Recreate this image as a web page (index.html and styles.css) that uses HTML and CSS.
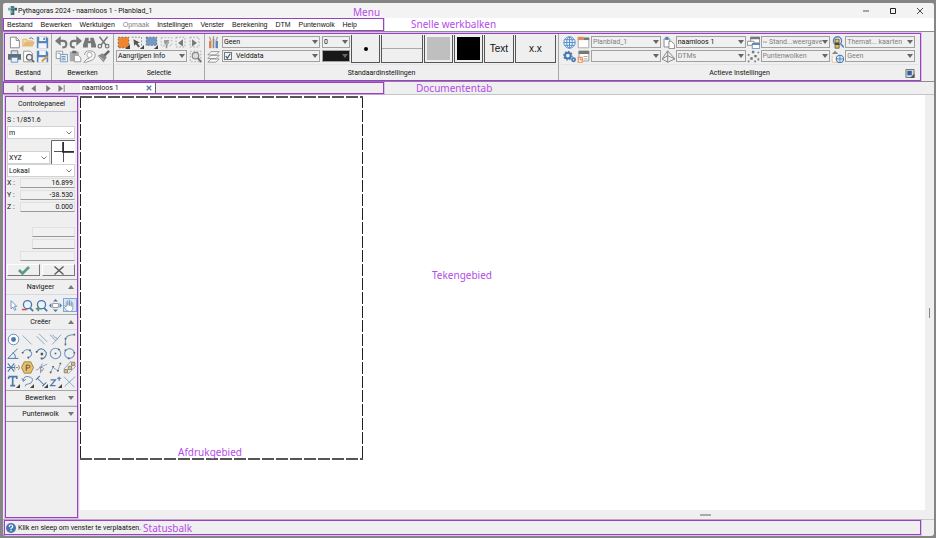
FILE: index.html
```html
<!DOCTYPE html>
<html lang="nl">
<head>
<meta charset="utf-8">
<title>Pythagoras 2024 - naamloos 1 - Planblad_1</title>
<link rel="stylesheet" href="styles.css">
</head>
<body>
<div class="window">
  <header class="titlebar">
    <svg class="app-icon" viewBox="0 0 10 10"><path d="M3 0h4v3H3z" fill="#4a7f82"/><path d="M0 2h3v3H0z" fill="#86a9a9"/><path d="M7 2h3v3H7z" fill="#2e5c66"/><path d="M3 3h4v7H3z" fill="#3b6e78"/><path d="M3 5h2v3H3z" fill="#7cb3ad"/></svg>
    <h1>Pythagoras 2024 - naamloos 1 - Planblad_1</h1>
    <span class="note note-menu">Menu</span>
    <div class="window-buttons">
      <button aria-label="Minimaliseren"><svg viewBox="0 0 8 8"><path d="M1 4h6" stroke="#555" fill="none"/></svg></button>
      <button aria-label="Maximaliseren"><svg viewBox="0 0 8 8"><path d="M1.500 1.500h5v5h-5z" stroke="#222" fill="none"/></svg></button>
      <button aria-label="Sluiten"><svg viewBox="0 0 8 8"><path d="M1 1l6 6M7 1l-6 6" stroke="#333" stroke-width=".9" fill="none"/></svg></button>
    </div>
  </header>

  <div class="menubar">
    <nav class="menu">
      <a href="#">Bestand</a><a href="#">Bewerken</a><a href="#">Werktuigen</a><a href="#" class="dim">Opmaak</a><a href="#">Instellingen</a><a href="#">Venster</a><a href="#">Berekening</a><a href="#">DTM</a><a href="#">Puntenwolk</a><a href="#">Help</a>
    </nav>
    <span class="note note-bars">Snelle werkbalken</span>
  </div>

  <div class="ribbon-row">
  <div class="ribbon">
    <section class="group g-file">
      <div class="tools cols3">
        <button aria-label="Nieuw"><svg viewBox="0 0 16 16"><path d="M3 1.500h7l4 4v9H3z" fill="#fff" stroke="#777"/><path d="M10 1.500v4h4" fill="none" stroke="#777"/></svg></button>
        <button aria-label="Openen"><svg viewBox="0 0 16 16"><path d="M1 13V4h5l1 2h6v3" fill="#f3d7a4" stroke="#d9ae6a"/><path d="M1 13l3-6h12l-3 6z" fill="#e5b873"/><path d="M9 3q3-2 5 1" stroke="#557" fill="none"/></svg></button>
        <button aria-label="Opslaan"><svg viewBox="0 0 16 16"><path d="M1 1h12l2 2v12H1z" fill="#5a84b8"/><path d="M4 1h8v5H4zM3 9h10v6H3z" fill="#f2f6fb"/><path d="M9 2h2v3H9z" fill="#5a84b8"/></svg></button>
        <button aria-label="Afdrukken"><svg viewBox="0 0 16 16"><path d="M4 1h8v5H4z" fill="#dde6f0" stroke="#666"/><path d="M0 5h16v7H0z" fill="#626d78"/><path d="M4 9h8v6H4z" fill="#e8eff8" stroke="#5a84b8"/></svg></button>
        <button aria-label="Afdrukvoorbeeld"><svg viewBox="0 0 16 16"><path d="M2 1.500h8l3 3v10H2z" fill="#fff" stroke="#888"/><circle cx="9" cy="9" r="3.500" fill="#eef" stroke="#666" stroke-width="1.500"/><path d="M12 12l3 3" stroke="#666" stroke-width="2"/></svg></button>
        <button aria-label="Opslaan als"><svg viewBox="0 0 16 16"><path d="M1 1h12l2 2v12H1z" fill="#5a84b8"/><path d="M4 1h8v5H4zM3 9h10v6H3z" fill="#f2f6fb"/><path d="M7 14l7-6" stroke="#d99a50" stroke-width="2.500"/></svg></button>
      </div>
      <h2>Bestand</h2>
    </section>

    <section class="group g-edit">
      <div class="tools cols4">
        <button aria-label="Ongedaan maken"><svg viewBox="0 0 16 16"><path d="M4 6h6q4 0 4 4t-5 4" fill="none" stroke="#777" stroke-width="2.500"/><path d="M0 6l7-6v12z" fill="#777"/></svg></button>
        <button aria-label="Opnieuw"><svg viewBox="0 0 16 16"><path d="M12 6H6q-4 0-4 4t5 4" fill="none" stroke="#777" stroke-width="2.500"/><path d="M16 6L9 0v12z" fill="#777"/></svg></button>
        <button aria-label="Zoeken"><svg viewBox="0 0 16 16"><path d="M3 2h4v4h2V2h4l3 9v3h-6V9H6v5H0v-3z" fill="#777"/></svg></button>
        <button aria-label="Knippen"><svg viewBox="0 0 16 16"><path d="M3 1l8 10M13 1L5 11" stroke="#777" stroke-width="1.800"/><circle cx="3.500" cy="12.500" r="2.200" fill="none" stroke="#777" stroke-width="1.500"/><circle cx="12.500" cy="12.500" r="2.200" fill="none" stroke="#777" stroke-width="1.500"/></svg></button>
        <button aria-label="Kopiëren"><svg viewBox="0 0 16 16"><path d="M1.500 1.500h8v9h-8z" fill="#fff" stroke="#888"/><path d="M6.500 5.500h9v9h-9z" fill="#e9f1fa" stroke="#6b8cb0"/><path d="M3 4h4M8 8h5M8 10h5M8 12h5" stroke="#5a84b8"/></svg></button>
        <button aria-label="Plakken"><svg viewBox="0 0 16 16"><path d="M1 2h11v12H1z" fill="#aaa"/><path d="M4 1h5v3H4z" fill="#666"/><path d="M6.500 6.500h5l3 3v5h-8z" fill="#fff" stroke="#888"/></svg></button>
        <button aria-label="Selectie kopiëren"><svg viewBox="0 0 16 16"><path d="M2 6Q2 1 8 1q7 0 7 5t-5 7l-6 2H1l4-4 3-1" fill="#f8f8f8" stroke="#999" stroke-width="1.200"/><circle cx="8" cy="6" r="3.200" fill="#fff" stroke="#999"/></svg></button>
        <button aria-label="Opmaak kopiëren"><svg viewBox="0 0 16 16"><path d="M1 7l6-3 5 5-4 6z" fill="#888"/><path d="M9 7l6-6" stroke="#666" stroke-width="3"/><path d="M3 8l6 5" stroke="#ccc"/></svg></button>
      </div>
      <h2>Bewerken</h2>
    </section>

    <section class="group g-select">
      <div class="tools cols6">
        <button aria-label="Selecteren"><svg viewBox="0 0 16 16"><path d="M1.500 1.500h13v13h-13z" fill="#f0852d" stroke="#555" stroke-dasharray="2 2"/><path d="M16 10v6h-6z" fill="#444"/></svg></button>
        <button aria-label="Selectie met pijl"><svg viewBox="0 0 16 16"><path d="M1 1.500h12v10" fill="none" stroke="#777" stroke-dasharray="2 2"/><path d="M3 4l8 4-3 1 3 4-2 1-3-4-2 2z" fill="#555"/><path d="M16 11v5h-5z" fill="#444"/></svg></button>
        <button aria-label="Vlakselectie"><svg viewBox="0 0 16 16"><path d="M1.500 1.500h13v10h-13z" fill="#7198c6" stroke="#666" stroke-dasharray="2 2"/><path d="M16 11v5h-5z" fill="#444"/></svg></button>
        <button aria-label="Selectie oplichten"><svg viewBox="0 0 16 16"><path d="M1.500 2h13v10h-13z" fill="none" stroke="#aaa" stroke-dasharray="2 2"/><path d="M5 5h6v4l-2 2v4H7v-4L5 9z" fill="#999"/><path d="M3 14l10-9" stroke="#ccc"/></svg></button>
        <button aria-label="Vorige selectie"><svg viewBox="0 0 16 16"><path d="M2.500 1.500h11v12h-11z" fill="none" stroke="#999" stroke-dasharray="2 2"/><path d="M11 4v9L5 8.500z" fill="#777"/></svg></button>
        <button aria-label="Volgende selectie"><svg viewBox="0 0 16 16"><path d="M2.500 1.500h11v12h-11z" fill="none" stroke="#999" stroke-dasharray="2 2"/><path d="M5 4v9l6-4.500z" fill="#777"/></svg></button>
      </div>
      <div class="line">
        <select class="grow" aria-label="Selectiewijze"><option>Aangrijpen Info</option></select>
        <button aria-label="Selectie zoeken"><svg viewBox="0 0 16 16"><path d="M1.500 1.500h13v13h-13z" fill="none" stroke="#999" stroke-dasharray="2 2"/><circle cx="8" cy="7" r="4" fill="#ddd" stroke="#888" stroke-width="1.500"/><path d="M11 10l4 5" stroke="#777" stroke-width="2.500"/></svg></button>
      </div>
      <h2>Selectie</h2>
    </section>

    <section class="group g-default">
      <div class="default-body">
        <div class="default-fields">
          <svg viewBox="0 0 16 16"><path d="M4 6v9" stroke="#e27c52" stroke-width="3"/><path d="M8 3v12" stroke="#888" stroke-width="2"/><path d="M12 6v9" stroke="#5a84b8" stroke-width="3"/><path d="M3 1l2 5M13 1l-2 5M8 0v4" stroke="#b98" stroke-width="1.500"/></svg>
          <select aria-label="Stijl"><option>Geen</option></select>
          <select aria-label="Dikte"><option>0</option></select>
          <svg viewBox="0 0 16 16"><path d="M1 15l4-4h10l-4 4zM1 10.500l4-4h10l-4 4zM1 6l4-4h10l-4 4z" fill="#f8f8f8" stroke="#888"/></svg>
          <div class="layer"><input type="checkbox" checked aria-label="Laag zichtbaar"><select aria-label="Laag"><option>Velddata</option></select></div>
          <select class="black" aria-label="Kleur"><option></option></select>
        </div>
        <button class="swatch" aria-label="Puntstijl"><i class="dot"></i></button>
        <button class="swatch wide" aria-label="Lijnstijl"><i class="stroke"></i></button>
        <button class="swatch" aria-label="Vulling"><i class="fill gray"></i></button>
        <button class="swatch" aria-label="Vulkleur"><i class="fill"></i></button>
        <button class="swatch">Text</button>
        <button class="swatch wide">x.x</button>
      </div>
      <h2>Standaardinstellingen</h2>
    </section>

    <section class="group g-active">
      <div class="active-fields">
        <svg viewBox="0 0 16 16"><g fill="none" stroke="#5a8fc6" stroke-width="1.200"><circle cx="8" cy="8" r="7" fill="#eef5fc"/><ellipse cx="8" cy="8" rx="3.500" ry="7"/><path d="M1 8h14M8 1v14M2 4.500h12M2 11.500h12"/></g></svg>
        <svg viewBox="0 0 16 16"><path d="M1.500 2.500h13v12h-13z" fill="#fff" stroke="#999"/><path d="M1 1h7v4H1z" fill="#e9894f"/><path d="M8 2h7v3H8z" fill="#777"/></svg>
        <select class="dim" aria-label="Planblad"><option>Planblad_1</option></select>
        <svg viewBox="0 0 16 16"><path d="M2.500 3.500h7v10h-7z" fill="#fff" stroke="#777"/><path d="M4 1h4v4H4z" fill="#5a84b8"/><path d="M8.500 6.500h3l4 4v5h-7z" fill="#fff" stroke="#777"/></svg>
        <select aria-label="Document"><option>naamloos 1</option></select>
        <svg viewBox="0 0 16 16"><path d="M4.500 1.500h11v7h-11z" fill="#fff" stroke="#777"/><path d="M4 1h12v3H4z" fill="#777"/><path d="M.5 6.500h8v5h-8z" fill="#fff" stroke="#777"/><path d="M6.500 9.500h9v6h-9z" fill="#fff" stroke="#5a84b8"/><path d="M6 9h10v2H6z" fill="#5a84b8"/></svg>
        <select class="dim" aria-label="Weergave"><option>~ Stand...weergave</option></select>
        <svg viewBox="0 0 16 16"><circle cx="8" cy="6" r="5" fill="#eaf2fb" stroke="#5a84b8" stroke-width="1.700"/><path d="M12 10l4 4" stroke="#5a84b8" stroke-width="2"/><path d="M5 4h5v11H5z" fill="#e7bd4d" stroke="#555"/><path d="M5 8h5v3H5z" fill="#444"/></svg>
        <select class="dim" aria-label="Thematische kaart"><option>Themat... kaarten</option></select>

        <svg viewBox="0 0 16 16"><circle cx="6" cy="7" r="3.500" fill="none" stroke="#4878b0" stroke-width="2.500"/><circle cx="6" cy="7" r="5.200" fill="none" stroke="#4878b0" stroke-width="1.500" stroke-dasharray="2 2"/><circle cx="13" cy="12" r="2" fill="none" stroke="#4878b0" stroke-width="2"/></svg>
        <svg viewBox="0 0 16 16"><path d="M2.500 1.500h12v12h-12z" fill="#fff" stroke="#888"/><path d="M2 1h13v4H2z" fill="#777"/><path d="M8 8h5M8 11h5" stroke="#999"/><path d="M1.500 9h5v6h-5zM4 9v3h3" fill="#fff" stroke="#e9894f" stroke-width="1.300"/></svg>
        <select class="dim" aria-label="Planbladdeel"><option></option></select>
        <svg viewBox="0 0 16 16"><path d="M0 11l7-10 9 10-9 4zM7 1v14M0 11l7-4 9 4" fill="none" stroke="#888" stroke-width="1.200"/></svg>
        <select class="dim" aria-label="DTM"><option>DTMs</option></select>
        <svg viewBox="0 0 16 16"><path d="M6 1h3v3H6zM13 2h2v2h-2zM1 5h2v2H1zM9 6h3v3H9zM4 9h3v3H4zM13 10h2v3h-2zM1 13h2v2H1zM9 13h2v2H9z" fill="#777"/></svg>
        <select class="dim" aria-label="Puntenwolk"><option>Puntenwolken</option></select>
        <svg viewBox="0 0 16 16"><path d="M1.500 7v8h6" fill="#fff" stroke="#e9b870"/><path d="M1 5l4-4 4 4z" fill="#888"/><circle cx="11" cy="11" r="4.500" fill="#dbe9f8" stroke="#4878b0" stroke-width="1.300"/><path d="M6 11h10M11 6v10" stroke="#4878b0"/></svg>
        <select class="dim" aria-label="Kaart"><option>Geen</option></select>
      </div>
      <div class="caption"><h2>Actieve Instellingen</h2>
        <button class="launcher" aria-label="Alle instellingen"><svg viewBox="0 0 10 10"><path d="M.5.5h9v9h-9z" fill="#d6dce6" stroke="#666"/><path d="M2 2h5v5H2z" fill="#38619c"/><path d="M10 5v5H5z" fill="#555"/></svg></button>
      </div>
    </section>
  </div>
  </div>

  <div class="tabrow">
    <div class="tabs">
      <div class="pager">
        <button aria-label="Eerste"><svg viewBox="0 0 8 8"><path d="M1.500 0v8" stroke="#777"/><path d="M8 0v8L3 4z" fill="#777"/></svg></button>
        <button aria-label="Vorige"><svg viewBox="0 0 8 8"><path d="M6 0v8L1 4z" fill="#777"/></svg></button>
        <button aria-label="Volgende"><svg viewBox="0 0 8 8"><path d="M2 0v8l5-4z" fill="#777"/></svg></button>
        <button aria-label="Laatste"><svg viewBox="0 0 8 8"><path d="M6.500 0v8" stroke="#777"/><path d="M0 0v8l5-4z" fill="#777"/></svg></button>
      </div>
      <div class="tab"><span>naamloos 1</span><button aria-label="Tab sluiten"><svg viewBox="0 0 8 8"><path d="M1 1l6 6M7 1L1 7" stroke="#5078ac" stroke-width="1.600"/></svg></button></div>
    </div>
    <span class="note note-tab">Documententab</span>
  </div>

  <main>
    <aside>
      <h2 class="panel-title">Controlepaneel</h2>
      <form class="control">
        <p>S : 1/851.6</p>
        <select class="open" aria-label="Eenheid"><option>m</option></select>
        <div class="axis">
          <select class="open" aria-label="Assen"><option>XYZ</option></select>
          <svg viewBox="0 0 24 24"><path d="M0 0h24v24H0z" fill="#fff"/><path d="M.5 24V.5H24" fill="none" stroke="#666"/><path d="M3 11.500h20M12.500 2v20" stroke="#555"/><path d="M12 2v10h11" fill="none" stroke="#222" stroke-width="1.500"/></svg>
        </div>
        <select class="open" aria-label="Stelsel"><option>Lokaal</option></select>
        <label>X :<input value="16.899"></label>
        <label>Y :<input value="-38.530"></label>
        <label>Z :<input value="0.000"></label>
        <div class="extra">
          <input class="short" aria-label="Afstand"><input class="short" aria-label="Hoek"><input aria-label="Commentaar">
        </div>
        <div class="confirm">
          <button type="button" aria-label="Bevestigen"><svg viewBox="0 0 12 9"><path d="M1 4l3.500 3.500L11 1" fill="none" stroke="#5a9a80" stroke-width="2.600"/></svg></button>
          <button type="button" aria-label="Annuleren"><svg viewBox="0 0 12 9"><path d="M1.500.5l9 8M10.500.5l-9 8" stroke="#555" stroke-width="1.300"/></svg></button>
        </div>
      </form>
      <button class="section up">Navigeer</button>
      <div class="palette nav">
        <button aria-label="Aanwijzen"><svg viewBox="0 0 16 16"><path d="M5 2v10l2.500-2 2 4 1.500-1-2-4h3z" fill="#fff" stroke="#5a84b8"/></svg></button>
        <button aria-label="Uitzoomen"><svg viewBox="0 0 16 16"><circle cx="8" cy="7" r="5" fill="#eaf2fb" stroke="#4878b0" stroke-width="1.600"/><path d="M11 11l4 4" stroke="#4878b0" stroke-width="2.200"/><path d="M1 13h6" stroke="#d95440" stroke-width="2"/></svg></button>
        <button aria-label="Inzoomen"><svg viewBox="0 0 16 16"><circle cx="8" cy="7" r="5" fill="#eaf2fb" stroke="#4878b0" stroke-width="1.600"/><path d="M11 11l4 4" stroke="#4878b0" stroke-width="2.200"/><path d="M1 12h6M4 9v6" stroke="#579070" stroke-width="2"/></svg></button>
        <button aria-label="Passend"><svg viewBox="0 0 16 16"><path d="M8 0l3 3H5zM8 16l3-3H5zM0 8l3-3v6zM16 8l-3-3v6z" fill="#4878b0"/><path d="M4.500 5.500h7v5h-7z" fill="#fff" stroke="#888"/></svg></button>
        <button class="on" aria-label="Verschuiven"><svg viewBox="0 0 16 16"><path d="M4 14l-3-5 1-1 2 2V4l1-1 1 1v4-6l1-1 1 1v6-5l1-1 1 1v6-4l1-1 1 1v7l-2 4z" fill="#fff" stroke="#7890aa"/></svg></button>
      </div>
      <button class="section up">Creëer</button>
      <div class="palette">
        <button aria-label="Punt"><svg viewBox="0 0 16 16"><circle cx="8" cy="8" r="6.500" fill="#fff" stroke="#4878b0"/><circle cx="8" cy="8" r="3" fill="#4878b0"/></svg></button>
        <button aria-label="Lijn"><svg viewBox="0 0 16 16"><path d="M2 3l11 11" stroke="#7198c6"/></svg></button>
        <button aria-label="Parallel"><svg viewBox="0 0 16 16"><path d="M2 4l10 10M5 1l10 10" stroke="#7198c6"/></svg></button>
        <button aria-label="Loodlijn"><svg viewBox="0 0 16 16"><path d="M1 2l8 8M4 14L15 2M4 2l4 4" fill="none" stroke="#7198c6"/><path d="M8 5l3 3" stroke="#888"/></svg></button>
        <button aria-label="Raakboog"><svg viewBox="0 0 16 16"><path d="M3 15V9q0-7 11-7" fill="none" stroke="#7198c6" stroke-width="1.300"/><path d="M2 6h2v2H2zM13 1h2v2h-2zM2 13h2v2H2z" fill="#666"/></svg></button>
        <button aria-label="Hoek"><svg viewBox="0 0 16 16"><path d="M13 2L1 14h13M7 7q4 2 3 7" fill="none" stroke="#4878b0" stroke-width="1.200"/></svg></button>
        <button aria-label="Boog"><svg viewBox="0 0 16 16"><path d="M2 7q5-8 11 0 1 4-4 6" fill="none" stroke="#7198c6" stroke-width="1.300"/><path d="M1 6h2v2H1zM8 12h2v2H8zM10 3h2v2h-2z" fill="#555"/></svg></button>
        <button aria-label="Middelpuntsboog"><svg viewBox="0 0 16 16"><path d="M2 6q6-8 12 1 0 6-6 8" fill="none" stroke="#4878b0" stroke-width="1.300"/><path d="M7 7h3v3H7zM1 5h2v2H1zM7 13h2v2H7z" fill="#555"/></svg></button>
        <button aria-label="Cirkel"><svg viewBox="0 0 16 16"><circle cx="8" cy="8" r="6.500" fill="none" stroke="#7198c6" stroke-width="1.300"/><path d="M7 7h2v2H7zM11 2h2v2h-2z" fill="#555"/></svg></button>
        <button aria-label="Cirkel door punten"><svg viewBox="0 0 16 16"><circle cx="8" cy="8" r="6" fill="none" stroke="#7198c6" stroke-width="1.300"/><path d="M2 3h2v2H2zM13 6h2v2h-2zM6 13h2v2H6z" fill="#666"/></svg></button>
        <button aria-label="Snijpunt"><svg viewBox="0 0 16 16"><path d="M1 3l8 10M9 3L1 13M0 8h10" stroke="#4878b0" stroke-width="1.300"/><path d="M10 5q-2 3 0 6M14 5q3 3 0 6M11 8h3" fill="none" stroke="#777"/></svg></button>
        <button aria-label="Veelhoek"><svg viewBox="0 0 16 16"><path d="M4 1h8l3.500 7L12 15H4L.5 8z" fill="#ebbe62" stroke="#8b7750"/><path d="M6.500 12V5h2.500q2 0 2 1.800t-2 1.800H6.500" fill="none" stroke="#555" stroke-width="1.200"/></svg></button>
        <button aria-label="Pad"><svg viewBox="0 0 16 16"><path d="M1 11q5 0 8-8M15 4L5 8" fill="none" stroke="#7198c6"/><path d="M7 15V8h2q3 1 0 4H7" fill="none" stroke="#777"/></svg></button>
        <button aria-label="Polylijn"><svg viewBox="0 0 16 16"><path d="M2 14l3-6 6 4 3-9" fill="none" stroke="#7198c6"/><path d="M1 13h2v2H1zM4 6h2v2H4zM10 11h2v2h-2zM13 2h2v2h-2z" fill="#555"/></svg></button>
        <button aria-label="Symbolen"><svg viewBox="0 0 16 16"><path d="M1 10L10 0M6 16l10-10" stroke="#7198c6"/><path d="M1.500 10.500h4v4h-4zM6.500 6.500h4v4h-4zM10.500 1.500h4v4h-4z" fill="#ebbe62" stroke="#777"/></svg></button>
        <button aria-label="Tekst"><svg viewBox="0 0 16 16"><path d="M2 2h10v3M7 2v11M4 13h6M2 2v3" stroke="#4878b0" stroke-width="2" fill="none"/><path d="M16 11v5h-5z" fill="#444"/></svg></button>
        <button aria-label="Roteren"><svg viewBox="0 0 16 16"><path d="M3 7q0-6 6-5t5 5-5 4-4 3M1 4l2 4 3-3" fill="none" stroke="#4878b0"/><path d="M16 11v5h-5z" fill="#444"/></svg></button>
        <button aria-label="Maatlijn"><svg viewBox="0 0 16 16"><path d="M1 6l5-5M9 14l5-5M3 4l8 8" stroke="#4878b0" stroke-width="1.300"/><path d="M16 11v5h-5z" fill="#444"/></svg></button>
        <button aria-label="Hoogte"><svg viewBox="0 0 16 16"><path d="M2 6h6l-6 7h6M10 4h5M12.500 2v5" fill="none" stroke="#4878b0" stroke-width="1.500"/><path d="M16 11v5h-5z" fill="#444"/></svg></button>
        <button aria-label="Kruis"><svg viewBox="0 0 16 16"><path d="M1 2l13 13M15 2L2 14" stroke="#7198c6"/></svg></button>
      </div>
      <button class="section down">Bewerken</button>
      <button class="section down">Puntenwolk</button>
    </aside>

    <div class="workspace">
      <div class="canvas">
        <div class="page"></div>
        <span class="note note-page">Afdrukgebied</span>
        <span class="note note-canvas">Tekengebied</span>
      </div>
      <div class="vscroll"><i></i></div>
      <div class="hscroll"><i></i></div>
    </div>
  </main>

  <footer>
    <div class="status">
      <svg viewBox="0 0 10 10"><circle cx="5" cy="5" r="5" fill="#4775ae"/><path d="M3.200 3.800Q3.500 2 5 2t1.800 1.500Q6.800 4.500 5 5.400v.8M5 7v1.200" fill="none" stroke="#fff" stroke-width="1.200"/></svg>
      <span>Klik en sleep om venster te verplaatsen.</span>
      <span class="note">Statusbalk</span>
    </div>
  </footer>
</div>
</body>
</html>
```
FILE: styles.css
```css
* { box-sizing: border-box; }

:root {
  --mark: #9a40c4;
  --halo: 0 0 0 1px rgba(170, 90, 215, .3);
  --chrome: #efefef;
  --line: #8c8c8c;
}

body {
  margin: 0;
  height: 100vh;
  padding: 3px 2px 2px 3px;
  background: #858585;
  font: 7px/10px Roboto, "Liberation Sans", sans-serif;
  color: #111;
}

h1, h2, p { margin: 0; font: inherit; }
svg { display: block; }
a { color: inherit; text-decoration: none; }

button {
  display: flex;
  align-items: center;
  justify-content: center;
  padding: 0;
  border: 0;
  background: none;
  font: inherit;
  color: inherit;
}

select, input {
  margin: 0;
  min-width: 0;
  font: inherit;
  color: inherit;
  border-radius: 0;
}

select {
  appearance: none;
  height: 12px;
  padding: 0 7px 0 1px;
  border: 1px solid #a0a0a0;
  background: #f0f0f0 url("data:image/svg+xml,%3Csvg xmlns='http://www.w3.org/2000/svg' viewBox='0 0 6 4'%3E%3Cpath d='M0 0h6L3 4z' fill='%23666'/%3E%3C/svg%3E") no-repeat right 1px center / 6px 4px;
}

.dim { color: #808080; }

.window {
  display: flex;
  flex-direction: column;
  height: 100%;
  background: var(--chrome);
  border-radius: 3px;
}

.note {
  font: 10px/12px "Noto Sans", sans-serif;
  color: #b54be8;
  white-space: nowrap;
}

/* Title bar and menu */
.titlebar {
  position: relative;
  display: flex;
  align-items: center;
  height: 15px;
  padding: 0 10px 0 5px;
  gap: 1px;
  background: #f3f3f3;
  border-radius: 3px 3px 0 0;
}
.app-icon { width: 9px; height: 9px; }
.note-menu { position: absolute; left: 350px; top: 3px; }
.window-buttons { display: flex; gap: 19px; margin-left: auto; }
.window-buttons svg { width: 8px; height: 8px; }

.menubar { display: flex; height: 13px; background: #fff; align-items: stretch; }
.menu {
  display: flex;
  align-items: center;
  justify-content: space-between;
  width: 381px;
  padding: 0 26px 0 3px;
  border: 1px solid var(--mark);
  box-shadow: var(--halo);
  font-family: "Liberation Sans", sans-serif;
}
.note-bars { margin-left: 27px; }
.note-tab { margin-left: 32px; }

/* Ribbon */
.ribbon-row {
  padding: 1px 13px 0 1px;
  border-top: 1px solid var(--line);
  border-bottom: 1px solid var(--line);
}
.ribbon {
  display: flex;
  height: 48px;
  border: 1px solid var(--mark);
  box-shadow: var(--halo);
}
.group {
  display: flex;
  flex-direction: column;
  border-right: 1px solid #a8a8a8;
  padding: 1px 2px 0;
}
.group:last-child { border-right: 0; }
.group h2 {
  margin-top: auto;
  padding: 3px 0 2px;
  text-align: center;
  border-top: 1px solid #e3e3ec;
}
.group svg { width: 13px; height: 13px; }
.g-file { width: 47px; }
.g-edit { width: 62px; }
.g-select { width: 91px; }
.g-default { width: 354px; }
.g-active { flex: 1; }

.tools { display: grid; grid-auto-rows: 14px; }
.cols3 { grid-template-columns: repeat(3, 1fr); }
.cols4 { grid-template-columns: repeat(4, 1fr); }
.cols6 { grid-template-columns: repeat(6, 1fr); }
.line { display: flex; align-items: center; gap: 1px; height: 14px; }
.line button { width: 14px; }
.grow { flex: 1; }

.default-body { display: flex; gap: 1px; height: 28px; }
.default-fields {
  display: grid;
  grid-template-columns: 13px 98px 28px;
  grid-auto-rows: 14px;
  column-gap: 2px;
  align-items: center;
}
.layer {
  display: flex;
  align-items: center;
  height: 12px;
  padding-left: 1px;
  border: 1px solid #a0a0a0;
}
.layer input {
  appearance: none;
  width: 8px;
  height: 8px;
  border: 1px solid #777;
  background: #eef3fb url("data:image/svg+xml,%3Csvg xmlns='http://www.w3.org/2000/svg' viewBox='0 0 8 8'%3E%3Cpath d='M1 4l2 3 4-6' fill='none' stroke='%23356' stroke-width='1.500'/%3E%3C/svg%3E") center / 6px 6px no-repeat;
}
.layer select { flex: 1; height: 10px; border: 0; padding-left: 4px; }
.black { background-color: #181818; }

.swatch {
  flex: 29;
  border: 1px solid #555;
  border-width: 0 1px 1px;
  font: 10px/12px "Liberation Sans", sans-serif;
}
.swatch.wide { flex: 42; }
.dot { width: 4px; height: 4px; border-radius: 50%; background: #000; }
.stroke { width: 100%; height: 1px; background: #aaa; }
.fill { width: 23px; height: 23px; background: #000; }
.fill.gray { background: #bfbfbf; }

.active-fields {
  display: grid;
  grid-template-columns: 13px 13px 1fr 13px 1fr 13px 1fr 13px 1fr;
  grid-auto-rows: 14px;
  column-gap: 1px;
  align-items: center;
  padding: 0 3px 0 2px;
}
.caption { position: relative; margin-top: auto; }
.launcher { position: absolute; right: 3px; bottom: 2px; }
.launcher svg { width: 10px; height: 9px; }

/* Document tabs */
.tabrow { display: flex; height: 13px; border-bottom: 1px solid #c4c4c4; }
.tabs { display: flex; width: 381px; border: 1px solid var(--mark); box-shadow: var(--halo); }
.pager { display: flex; align-items: center; gap: 6px; width: 76px; padding-left: 12px; }
.pager svg { width: 8px; height: 7px; }
.tab {
  display: flex;
  align-items: center;
  justify-content: space-between;
  width: 76px;
  padding: 0 3px 0 2px;
  background: #fff;
  border-right: 1px solid #666;
}
.tab svg { width: 6px; height: 6px; }

/* Control panel */
main { display: flex; flex: 1; min-height: 0; }
aside {
  display: flex;
  flex-direction: column;
  width: 73px;
  margin: 1px 2px 1px 2px;
  border: 1px solid var(--mark);
  box-shadow: var(--halo);
}
.panel-title { height: 15px; padding-top: 2px; text-align: center; border-bottom: 1px solid #c5c5d0; }
.control { display: flex; flex-direction: column; padding: 3px 2px 3px 1px; }
.control p { height: 11px; }
.open {
  height: 13px;
  background: #fff url("data:image/svg+xml,%3Csvg xmlns='http://www.w3.org/2000/svg' viewBox='0 0 6 4'%3E%3Cpath d='M.5.5L3 3 5.500.5' fill='none' stroke='%23777'/%3E%3C/svg%3E") no-repeat right 2px center / 6px 4px;
  border-color: #d2d2d2;
}
.axis { display: flex; align-items: flex-end; gap: 1px; height: 25px; }
.axis select { flex: 1; }
.axis svg { width: 24px; height: 24px; }
.control label { display: flex; align-items: center; justify-content: space-between; height: 12px; }
.control input {
  width: 55px;
  height: 10px;
  padding: 0 1px;
  text-align: right;
  background: #f1f1f1;
  border: 1px solid #e0e0e0;
  border-bottom-color: #999;
}
.extra { display: flex; flex-direction: column; align-items: flex-end; gap: 2px; padding: 14px 0 3px; }
.control .short { width: 43px; }
.confirm { display: flex; gap: 2px; }
.confirm button {
  flex: 1;
  height: 12px;
  border: 1px solid #fff;
  border-right-color: #777;
  border-bottom-color: #777;
}
.confirm svg { width: 12px; height: 9px; }

.section {
  height: 16px;
  padding-right: 2px;
  border-top: 1px solid #a8a8a8;
  border-bottom: 1px solid #d8d8e4;
  background: url("data:image/svg+xml,%3Csvg xmlns='http://www.w3.org/2000/svg' viewBox='0 0 6 4'%3E%3Cpath d='M0 0h6L3 4z' fill='%23777'/%3E%3C/svg%3E") no-repeat right 3px center / 6px 4px;
}
.section.up {
  background-image: url("data:image/svg+xml,%3Csvg xmlns='http://www.w3.org/2000/svg' viewBox='0 0 6 4'%3E%3Cpath d='M0 4h6L3 0z' fill='%23777'/%3E%3C/svg%3E");
}
.section:last-child { border-bottom-color: #999; }
.palette { display: grid; grid-template-columns: repeat(5, 1fr); grid-auto-rows: 14px; padding: 2px 0; }
.palette svg { width: 13px; height: 13px; }
.palette.nav { padding: 3px 0 2px; }
.palette .on { outline: 1px solid #7ba7dc; outline-offset: -1px; background: #d9e8f8; }

/* Drawing area */
.workspace {
  flex: 1;
  display: grid;
  grid-template: 1fr 9px / 1fr 9px;
}
.canvas { position: relative; padding-top: 1px; background: #fff; }
.page {
  width: 33.5%;
  height: 88%;
  background:
    repeating-linear-gradient(90deg, #555 0 12px, #fff 12px 14px) top / 100% 2px no-repeat,
    repeating-linear-gradient(90deg, #555 0 12px, #fff 12px 14px) bottom / 100% 2px no-repeat,
    repeating-linear-gradient(#222 0 12px, #fff 12px 14px) left / 1px 100% no-repeat,
    repeating-linear-gradient(#222 0 12px, #fff 12px 14px) right / 1px 100% no-repeat;
}
.note-page { position: absolute; left: 98px; top: 351px; }
.note-canvas { position: absolute; left: 352px; top: 174px; }
.vscroll, .hscroll { display: flex; align-items: center; justify-content: center; }
.hscroll { padding-left: 405px; }
.vscroll { padding-top: 20px; }
.vscroll i { width: 1px; height: 10px; background: #888; }
.hscroll i { width: 11px; height: 2px; background: #aaa; }

/* Status bar */
footer { padding: 0 13px 1px 1px; border-top: 1px solid #c8c8c8; }
.status {
  display: flex;
  align-items: center;
  gap: 2px;
  height: 15px;
  padding-left: 1px;
  border: 1px solid var(--mark);
  box-shadow: var(--halo);
}
.status svg { width: 10px; height: 10px; }
```
